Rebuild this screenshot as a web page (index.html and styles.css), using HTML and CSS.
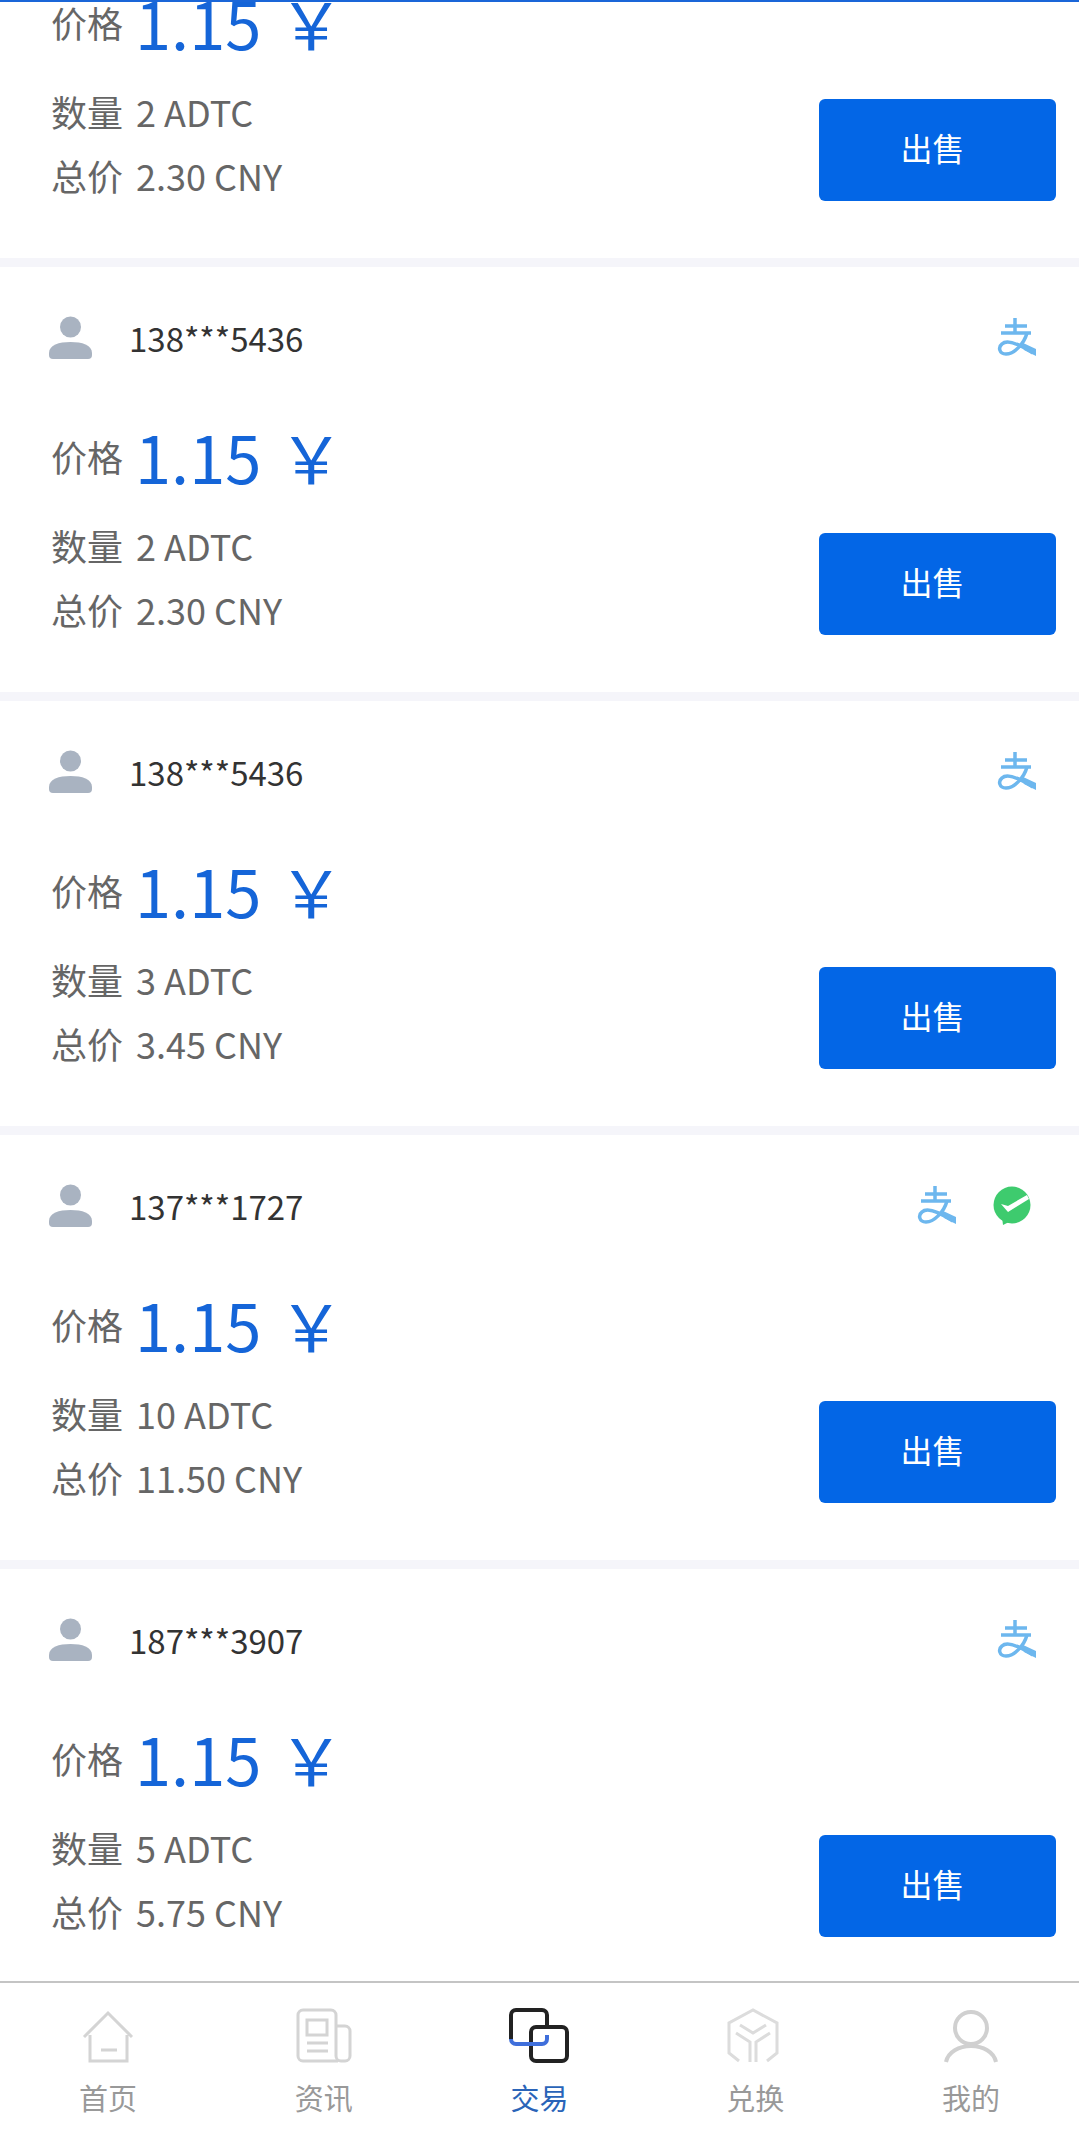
FILE: index.html
```html
<!DOCTYPE html>
<html lang="zh-CN">

<head>
    <meta charset="utf-8">
    <meta name="viewport" content="width=device-width, initial-scale=1">
    <title>交易</title>
    <link rel="stylesheet" href="styles.css">
</head>

<body>
    <svg class="defs" width="0" height="0">
        <symbol id="i-user" viewBox="0 0 44 44">
            <circle cx="21.5" cy="11" r="10.5" fill="#a9b3c1"/>
            <path d="M0 37C0 29 10 26 21.5 26S43 29 43 37v2a4 4 0 0 1-4 4H4a4 4 0 0 1-4-4z" fill="#a9b3c1"/>
        </symbol>
        <symbol id="i-alipay" viewBox="0 0 40 40">
            <g fill="none" stroke="#6db7ee" stroke-width="3.5">
                <path d="M8 8H30M18 0V16M4 15H34"/>
                <path d="M30 15C27 26 17 36 9 36C2 36 1 29 5 26C10 21 22 26 36 35"/>
            </g>
            <path d="M24 24L39 31L39 38L27 32z" fill="#6db7ee"/>
        </symbol>
        <symbol id="i-wechat" viewBox="0 0 40 40">
            <circle cx="20" cy="19" r="18.5" fill="#3ecb6e"/>
            <path d="M10 31L11 39L19 35z" fill="#3ecb6e"/>
            <path d="M9 18L16 20L35 9L37 13L16 26z" fill="#fff"/>
        </symbol>
    </svg>

    <div class="topline"></div>

    <main class="list">
        <section class="card">
            <div class="card-head">
                <svg class="avatar"><use href="#i-user"/></svg>
                <span class="name">138***5436</span>
                <div class="pay"><svg class="pay-icon"><use href="#i-alipay"/></svg></div>
            </div>
            <div class="price-row"><span class="label">价格</span><span class="price">1.15 ￥</span></div>
            <div class="card-foot">
                <div class="info">
                    <p><span class="label">数量</span>2 ADTC</p>
                    <p><span class="label">总价</span>2.30 CNY</p>
                </div>
                <button class="sell">出售</button>
            </div>
        </section>

        <section class="card">
            <div class="card-head">
                <svg class="avatar"><use href="#i-user"/></svg>
                <span class="name">138***5436</span>
                <div class="pay"><svg class="pay-icon"><use href="#i-alipay"/></svg></div>
            </div>
            <div class="price-row"><span class="label">价格</span><span class="price">1.15 ￥</span></div>
            <div class="card-foot">
                <div class="info">
                    <p><span class="label">数量</span>2 ADTC</p>
                    <p><span class="label">总价</span>2.30 CNY</p>
                </div>
                <button class="sell">出售</button>
            </div>
        </section>

        <section class="card">
            <div class="card-head">
                <svg class="avatar"><use href="#i-user"/></svg>
                <span class="name">138***5436</span>
                <div class="pay"><svg class="pay-icon"><use href="#i-alipay"/></svg></div>
            </div>
            <div class="price-row"><span class="label">价格</span><span class="price">1.15 ￥</span></div>
            <div class="card-foot">
                <div class="info">
                    <p><span class="label">数量</span>3 ADTC</p>
                    <p><span class="label">总价</span>3.45 CNY</p>
                </div>
                <button class="sell">出售</button>
            </div>
        </section>

        <section class="card">
            <div class="card-head">
                <svg class="avatar"><use href="#i-user"/></svg>
                <span class="name">137***1727</span>
                <div class="pay pay-two">
                    <svg class="pay-icon"><use href="#i-alipay"/></svg>
                    <svg class="pay-icon wechat"><use href="#i-wechat"/></svg>
                </div>
            </div>
            <div class="price-row"><span class="label">价格</span><span class="price">1.15 ￥</span></div>
            <div class="card-foot">
                <div class="info">
                    <p><span class="label">数量</span>10 ADTC</p>
                    <p><span class="label">总价</span>11.50 CNY</p>
                </div>
                <button class="sell">出售</button>
            </div>
        </section>

        <section class="card">
            <div class="card-head">
                <svg class="avatar"><use href="#i-user"/></svg>
                <span class="name">187***3907</span>
                <div class="pay"><svg class="pay-icon"><use href="#i-alipay"/></svg></div>
            </div>
            <div class="price-row"><span class="label">价格</span><span class="price">1.15 ￥</span></div>
            <div class="card-foot">
                <div class="info">
                    <p><span class="label">数量</span>5 ADTC</p>
                    <p><span class="label">总价</span>5.75 CNY</p>
                </div>
                <button class="sell">出售</button>
            </div>
        </section>
    </main>

    <nav class="tabbar">
        <a class="tab">
            <svg class="tab-icon" viewBox="0 0 64 56">
                <path d="M8 29L32 5L56 29M14 27V53H51V27M25 42H41" fill="none" stroke="#d4d4d4" stroke-width="3"/>
            </svg>
            <span>首页</span>
        </a>
        <a class="tab">
            <svg class="tab-icon" viewBox="0 0 64 56">
                <g fill="none" stroke="#d4d4d4" stroke-width="3">
                    <path d="M46 53H11a5 5 0 0 1-5-5V7a5 5 0 0 1 5-5H39a5 5 0 0 1 5 5V48a5 5 0 0 0 5 5h4a5 5 0 0 0 5-5V23a5 5 0 0 0-5-5H44"/>
                    <rect x="15" y="12" width="20" height="15"/>
                    <path d="M15 35H36M15 43H36"/>
                </g>
            </svg>
            <span>资讯</span>
        </a>
        <a class="tab tab-on">
            <svg class="tab-icon" viewBox="0 0 64 56">
                <g fill="none" stroke-width="4">
                    <path d="M40 19V7a5 5 0 0 0-5-5H9a5 5 0 0 0-5 5V31" stroke="#222"/>
                    <rect x="24" y="19" width="36" height="34" rx="5" stroke="#222"/>
                    <path d="M4 31a5 5 0 0 0 5 5H35a5 5 0 0 0 5-5V27" stroke="#3f6fdb"/>
                </g>
            </svg>
            <span>交易</span>
        </a>
        <a class="tab">
            <svg class="tab-icon" viewBox="0 0 64 56">
                <g fill="none" stroke="#dcdcdc" stroke-width="3">
                    <path d="M16 53L6 45V15L30 2L54 15V45L44 53"/>
                    <path d="M17 17L30 25L43 17"/>
                    <path d="M13 25L27 34V54M47 25L33 34V54"/>
                </g>
            </svg>
            <span>兑换</span>
        </a>
        <a class="tab">
            <svg class="tab-icon" viewBox="0 0 64 56">
                <g fill="none" stroke="#d0d0d0" stroke-width="4">
                    <circle cx="32" cy="20" r="16"/>
                    <path d="M7 54C9 44 20 38 32 38S55 44 57 54"/>
                </g>
            </svg>
            <span>我的</span>
        </a>
    </nav>
</body>
</html>
```

FILE: styles.css
```css
* {
    box-sizing: border-box;
}

body {
    margin: 0;
    height: 2151px;
    display: flex;
    flex-direction: column;
    overflow: hidden;
    background: #fff;
    font-family: "Noto Sans CJK SC", "Noto Sans", sans-serif;
}

.defs {
    position: absolute;
}

p {
    margin: 0;
}

/* 顶部蓝线 */
.topline {
    position: relative;
    z-index: 1;
    flex: none;
    height: 2px;
    background: #1a66d8;
}

.list {
    flex: 1;
    min-height: 0;
    overflow: hidden;
    background: #f5f5fa;
}

.card {
    height: 425px;
    margin-bottom: 9px;
    padding: 49px 23px 0 51px;
    background: #fff;
}

.card:first-child {
    margin-top: -169px;
}

.card-head {
    display: flex;
    align-items: center;
    height: 44px;
}

.avatar {
    width: 44px;
    height: 44px;
    margin-left: -2px;
    margin-right: 36px;
}

.name {
    font-size: 33px;
    color: #333;
}

.pay {
    display: flex;
    gap: 35px;
    margin-left: auto;
    padding-right: 19px;
}

.pay-icon {
    width: 40px;
    height: 40px;
}

.wechat {
    margin-right: 5px;
}

.price-row {
    display: flex;
    align-items: center;
    height: 90px;
    margin-top: 51px;
}

.label {
    margin-right: 13px;
    font-size: 36px;
    color: #666;
}

.price-row .label {
    margin-right: 12px;
}

.price {
    font-size: 65px;
    line-height: 90px;
    word-spacing: 3px;
    color: #1565d8;
}

.card-foot {
    display: flex;
    justify-content: space-between;
    align-items: flex-start;
    margin-top: 12px;
}

.info {
    font-size: 36px;
    line-height: 64px;
    color: #666;
}

.sell {
    width: 237px;
    height: 102px;
    margin-top: 20px;
    padding: 0 10px 6px 0;
    border: none;
    border-radius: 6px;
    background: #0366e6;
    color: #fff;
    font-family: inherit;
    font-size: 32px;
}

/* 底部导航 */
.tabbar {
    position: relative;
    z-index: 1;
    flex: none;
    display: grid;
    grid-template-columns: repeat(5, 1fr);
    height: 170px;
    padding-top: 25px;
    border-top: 2px solid #c4c4c4;
    background: #fff;
}

.tab {
    display: flex;
    flex-direction: column;
    align-items: center;
    font-size: 29px;
    line-height: 40px;
    color: #999;
}

.tab-icon {
    width: 64px;
    height: 56px;
    margin-bottom: 13px;
}

.tab-on {
    color: #2a64b8;
}
```
